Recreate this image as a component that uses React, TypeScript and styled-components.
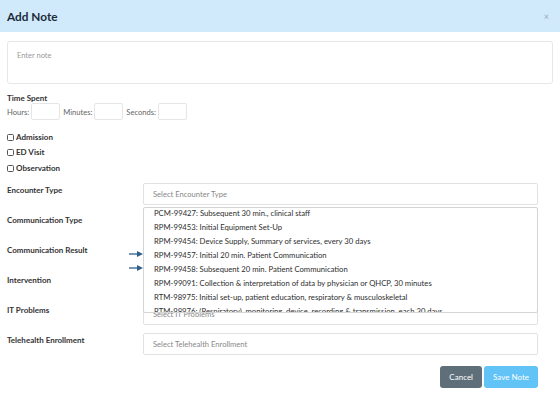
import React from "react";
import styled, { createGlobalStyle } from "styled-components";

const Global = createGlobalStyle`
  html, body { margin: 0; padding: 0; background: #fff; }
  body { font-family: Lato, "Open Sans", sans-serif; color: #333; }
  * { box-sizing: border-box; }
`;

const Dialog = styled.div`
  width: 560px;
  height: 399px;
  background: #fff;
  display: flex;
  flex-direction: column;
`;

const Header = styled.div`
  height: 32px;
  background: #d1eafb;
  display: flex;
  align-items: center;
  justify-content: space-between;
  padding: 0 11px 0 7px;
`;

const Title = styled.h1`
  margin: 0;
  font-size: 11.8px;
  font-weight: 700;
  color: #1c2a3a;
`;

const Close = styled.span`
  font-size: 9px;
  color: #9aa9b5;
  line-height: 1;
`;

const Body = styled.div`
  padding: 9px 7px 0 7px;
  display: flex;
  flex-direction: column;
`;

const NoteArea = styled.div`
  height: 43px;
  border: 1px solid #e7e7e7;
  border-radius: 3px;
  padding: 9px 9px;
  font-size: 7.5px;
  color: #9a9a9a;
`;

const SectionLabel = styled.div`
  margin-top: 9px;
  font-size: 8px;
  font-weight: 700;
  color: #333;
  line-height: 10px;
`;

const TimeRow = styled.div`
  display: flex;
  align-items: center;
  gap: 2px;
  margin-top: 0;
  font-size: 7.6px;
  color: #666;
`;

const TimeInput = styled.div`
  width: 29px;
  height: 17px;
  border: 1px solid #e6e6e6;
  border-radius: 2px;
  margin-right: 1px;
`;

const Checks = styled.div`
  display: flex;
  flex-direction: column;
  gap: 6.5px;
  margin-top: 12.5px;
`;

const CheckRow = styled.label`
  display: flex;
  align-items: center;
  gap: 2px;
  font-size: 8px;
  font-weight: 700;
  color: #333;
  line-height: 9px;
`;

const Box = styled.span`
  width: 7px;
  height: 7px;
  border: 1px solid #555;
  border-radius: 1.5px;
  display: inline-block;
`;

const Fields = styled.div`
  display: flex;
  flex-direction: column;
  gap: 8px;
  margin-top: 10px;
  padding-right: 15px;
`;

const FieldRow = styled.div`
  display: flex;
  align-items: flex-start;
`;

const FieldLabel = styled.div`
  width: 136px;
  padding-top: 2px;
  font-size: 8px;
  font-weight: 700;
  color: #333;
`;

const SelectWrap = styled.div`
  position: relative;
  flex: 1;
`;

const Select = styled.div`
  height: 22px;
  border: 1px solid #e2e2e2;
  border-radius: 2px;
  padding: 0 9px;
  display: flex;
  align-items: center;
  font-size: 7.6px;
  color: #888;
  background: #fff;
`;

const Dropdown = styled.div`
  position: absolute;
  left: 0;
  right: 0;
  top: 24px;
  height: 106px;
  z-index: 5;
`;

const ListBox = styled.div`
  height: 100%;
  border: 1px solid #d4d4d4;
  border-radius: 2px;
  background: #fff;
  overflow: hidden;
`;

const List = styled.ul`
  list-style: none;
  margin: -2px 0 0 0;
  padding: 0;
`;

const Item = styled.li`
  height: 14px;
  line-height: 14px;
  padding-left: 10px;
  font-size: 7.7px;
  color: #2e2e2e;
  white-space: nowrap;
`;

const Arrow = styled.svg<{ $top: number }>`
  position: absolute;
  left: -14px;
  top: ${(p) => p.$top}px;
  width: 14px;
  height: 6px;
`;

const Footer = styled.div`
  display: flex;
  justify-content: flex-end;
  gap: 2px;
  margin-top: 11px;
  padding-right: 15px;
`;

const Button = styled.button<{ $primary?: boolean }>`
  height: 22px;
  padding: 0 9px;
  border: none;
  border-radius: 3px;
  font-family: Lato, sans-serif;
  font-size: 8px;
  color: #fff;
  background: ${(p) => (p.$primary ? "#62c3f7" : "#5f6f7a")};
`;

const items = [
  "PCM-99427: Subsequent 30 min., clinical staff",
  "RPM-99453: Initial Equipment Set-Up",
  "RPM-99454: Device Supply, Summary of services, every 30 days",
  "RPM-99457: Initial 20 min. Patient Communication",
  "RPM-99458: Subsequent 20 min. Patient Communication",
  "RPM-99091: Collection & interpretation of data by physician or QHCP, 30 minutes",
  "RTM-98975: Initial set-up, patient education, respiratory & musculoskeletal",
  "RTM-98976: (Respiratory), monitoring, device, recording & transmission, each 30 days",
];

const ArrowIcon = ({ top }: { top: number }) => (
  <Arrow $top={top} viewBox="0 0 14 6">
    <line x1="0" y1="3" x2="9" y2="3" stroke="#2d5f8c" strokeWidth="1.3" />
    <polygon points="8,0 14,3 8,6" fill="#2d5f8c" />
  </Arrow>
);

export default function App() {
  return (
    <Dialog>
      <Global />
      <Header>
        <Title>Add Note</Title>
        <Close>×</Close>
      </Header>
      <Body>
        <NoteArea>Enter note</NoteArea>
        <SectionLabel>Time Spent</SectionLabel>
        <TimeRow>
          Hours:<TimeInput />
          Minutes:<TimeInput />
          Seconds:<TimeInput />
        </TimeRow>
        <Checks>
          <CheckRow><Box />Admission</CheckRow>
          <CheckRow><Box />ED Visit</CheckRow>
          <CheckRow><Box />Observation</CheckRow>
        </Checks>
        <Fields>
          <FieldRow>
            <FieldLabel>Encounter Type</FieldLabel>
            <SelectWrap>
              <Select>Select Encounter Type</Select>
              <Dropdown>
                <ListBox>
                  <List>
                    {items.map((t) => (
                      <Item key={t}>{t}</Item>
                    ))}
                  </List>
                </ListBox>
                <ArrowIcon top={44} />
                <ArrowIcon top={58} />
              </Dropdown>
            </SelectWrap>
          </FieldRow>
          <FieldRow>
            <FieldLabel>Communication Type</FieldLabel>
            <SelectWrap><Select>Select Communication Type</Select></SelectWrap>
          </FieldRow>
          <FieldRow>
            <FieldLabel>Communication Result</FieldLabel>
            <SelectWrap><Select>Select Communication Result</Select></SelectWrap>
          </FieldRow>
          <FieldRow>
            <FieldLabel>Intervention</FieldLabel>
            <SelectWrap><Select>Select Intervention</Select></SelectWrap>
          </FieldRow>
          <FieldRow>
            <FieldLabel>IT Problems</FieldLabel>
            <SelectWrap><Select>Select IT Problems</Select></SelectWrap>
          </FieldRow>
          <FieldRow>
            <FieldLabel>Telehealth Enrollment</FieldLabel>
            <SelectWrap><Select>Select Telehealth Enrollment</Select></SelectWrap>
          </FieldRow>
        </Fields>
        <Footer>
          <Button>Cancel</Button>
          <Button $primary>Save Note</Button>
        </Footer>
      </Body>
    </Dialog>
  );
}
